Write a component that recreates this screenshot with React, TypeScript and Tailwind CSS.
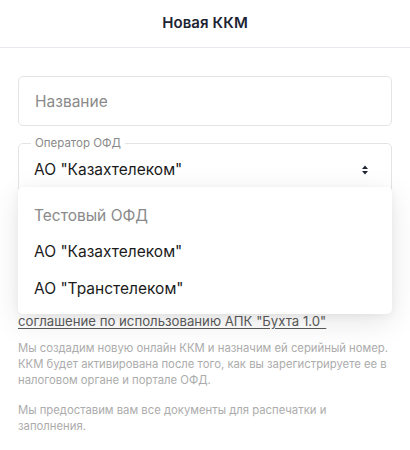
import React, { useState } from 'react';

const operators = [
  { id: 'test', label: 'Тестовый ОФД', disabled: true },
  { id: 'kaztel', label: 'АО "Казахтелеком"' },
  { id: 'transtel', label: 'АО "Транстелеком"' },
];

function UpDownIcon() {
  return (
    <svg width="10" height="12" viewBox="0 0 10 12" className="text-[#1f2533]">
      <path d="M5 1.5 L8 5 H2 Z" fill="currentColor" />
      <path d="M5 10.5 L8 7 H2 Z" fill="currentColor" />
    </svg>
  );
}

export default function App() {
  const [name, setName] = useState('');
  const [operator, setOperator] = useState('kaztel');
  const [open, setOpen] = useState(true);

  const current = operators.find(o => o.id === operator);

  return (
    <div className="w-[410px] h-[450px] bg-white overflow-hidden font-['Inter',sans-serif]">
      <header className="h-[48px] flex items-center justify-center border-b border-[#e8e8ee]">
        <h1 className="text-[15px] font-semibold text-[#1d2433] tracking-[0.1px]">Новая ККМ</h1>
      </header>

      <div className="px-[18px] pt-[28px]">
        <input
          type="text"
          value={name}
          placeholder="Название"
          onChange={e => setName(e.target.value)}
          className="w-full h-[50px] rounded-[5px] border border-[#e4e4e4] px-4 text-[15.5px] text-[#222] placeholder:text-[#8a8a8a] outline-none"
        />

        {/* outlined select with floating legend */}
        <div className="relative mt-[17px]">
          <fieldset className="absolute inset-x-0 top-[-6px] bottom-0 rounded-[5px] border border-[#e4e4e4] px-[12px] pointer-events-none">
            <legend className="px-[4px] text-[11.5px] leading-[12px] text-[#8a8a8a]">Оператор ОФД</legend>
          </fieldset>
          <button
            type="button"
            onClick={() => setOpen(o => !o)}
            className="relative w-full h-[50px] flex items-center justify-between pl-4 pr-[22px] pt-[4px] text-left"
          >
            <span className="text-[15.5px] text-[#1b1b1b]">{current?.label}</span>
            <UpDownIcon />
          </button>

          {open && (
            <ul className="absolute left-0 right-0 top-[44px] z-10 bg-white rounded-[5px] pt-[10px] pb-[7px] shadow-[0_8px_30px_rgba(0,0,0,0.10),0_2px_8px_rgba(0,0,0,0.05)]">
              {operators.map(o => (
                <li
                  key={o.id}
                  onClick={() => {
                    if (o.disabled) return;
                    setOperator(o.id);
                    setOpen(false);
                  }}
                  className={`h-[36.5px] flex items-center px-4 text-[15.5px] ${o.disabled ? 'text-[#8a8a8a]' : 'text-[#1b1b1b] cursor-pointer'}`}
                >
                  {o.label}
                </li>
              ))}
            </ul>
          )}
        </div>

        <div className="mt-[118px] leading-[18px]">
          <a href="#" className="text-[13.2px] text-[#5b5b5b] underline underline-offset-2">
            соглашение по использованию АПК "Бухта 1.0"
          </a>
        </div>
        <p className="mt-[10px] text-[11.3px] leading-[16px] text-[#acacac]">
          Мы создадим новую онлайн ККМ и назначим ей серийный номер. ККМ будет активирована после того, как вы зарегистрируете ее в налоговом органе и портале ОФД.
        </p>
        <p className="mt-[14px] text-[11.3px] leading-[16px] text-[#acacac]">
          Мы предоставим вам все документы для распечатки и заполнения.
        </p>
      </div>
    </div>
  );
}
